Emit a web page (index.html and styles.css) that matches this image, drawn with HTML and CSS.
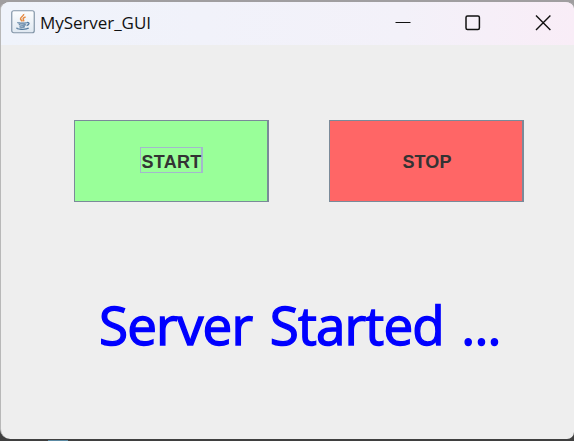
FILE: index.html
```
<!DOCTYPE html>
<html lang="en">
<head>
<meta charset="utf-8">
<title>MyServer_GUI</title>
<link rel="stylesheet" href="styles.css">
</head>
<body>
<div class="window">
  <header class="titlebar">
    <svg class="app-icon" viewBox="0 0 24 24" width="24" height="24" fill="none">
      <defs><linearGradient id="tile" x1="0" y1="0" x2="0" y2="1"><stop offset="0" stop-color="#fdfeff"/><stop offset="1" stop-color="#dfe8f1"/></linearGradient></defs>
      <rect x=".75" y=".75" width="22.5" height="22" rx="2" fill="url(#tile)" stroke="#8295a7" stroke-width="1.2"/>
      <path d="M12.700 4c.5 2-3.500 3-3.200 5 .1 1 1.500 1.500 1.900 2.400M14.600 7c-1.400.4-2.800 1.300-2.400 2.300.3.8 1 .9.200 2.100" stroke="#e58a42" stroke-width="1.500"/>
      <path d="M6.800 12.300c-.8 1 8.700.9 9 .1M7.800 14.500c1.500.9 5.500.8 7 .1M8.500 16.600c1.500.7 4 .6 5.300.1M16 12.600c3-.7 2.500 2.400-.4 2.900M6.400 17.800c-3 1.500 8.800 2.300 11.300.3" stroke="#557b9e" stroke-width="1.300"/>
    </svg>
    <span class="title">MyServer_GUI</span>
    <div class="controls">
      <svg viewBox="0 0 16 16"><path d="M.5 7.500h15"/></svg>
      <svg viewBox="0 0 16 16"><rect x="1" y="1" width="13.400" height="13.400" rx="1.500" stroke-width="1.500"/></svg>
      <svg viewBox="0 0 16 16"><path d="M1 .500l14.400 14.400M15.400.500L1 14.900" stroke-width="1.400"/></svg>
    </div>
  </header>
  <main class="content">
    <div class="buttons">
      <button class="btn start"><span class="focus">START</span></button>
      <button class="btn stop"><span>STOP</span></button>
    </div>
    <p class="status">Server Started ...</p>
  </main>
</div>
</body>
</html>
```
FILE: styles.css
```
* { box-sizing: border-box; }
body {
  margin: 0;
  width: 574px;
  height: 441px;
  overflow: hidden;
  background:
    linear-gradient(#5c8ba4, #5c8ba4) 48px 440px / 20px 1px no-repeat,
    linear-gradient(#77964f, #77964f) 14px 0 / 9px 1px no-repeat,
    linear-gradient(#a09ea0 0 50%, #3f3f3f 50%);
}
.window {
  height: 439px;
  border-top: 2px solid #a09ea0;
  border-left: 1px solid #b8b8b8;
  border-radius: 10px 9px 7px 10px;
  overflow: hidden;
  background: #eee;
}
.titlebar {
  display: flex;
  align-items: center;
  height: 43px;
  padding: 0 23px 2px 10px;
  background: linear-gradient(90deg, #eff3fb, #f3f1f9 70%, #f9edf7);
}
.app-icon { margin-top: -1px; }
.title {
  margin-left: 5px;
  font: 17px/24px "Open Sans", sans-serif;
  letter-spacing: -0.05px;
  color: #111;
}
.controls { display: flex; gap: 54px; margin-left: auto; }
.controls svg {
  display: block;
  width: 16px;
  height: 16px;
  fill: none;
  stroke: #111;
  stroke-width: 1;
}
.content { padding: 75px 50px 0 73px; }
.buttons { display: flex; justify-content: space-between; }
.btn {
  display: flex;
  align-items: center;
  justify-content: center;
  width: 195px;
  height: 82px;
  padding: 0 0 0 2px;
  border: 1px solid #7a8a99;
  border-right-width: 2px;
  font: bold 18px/25px "Liberation Sans", Arial, sans-serif;
  color: #333;
}
.start { background: #9f9; padding: 0 0 2px; }
.stop { background: #f66; letter-spacing: 0.1px; padding-top: 2px; }
.focus {
  width: 63px;
  height: 26px;
  padding-left: 1px;
  border: 1px solid #a3b8cc;
  border-right-width: 2px;
  line-height: 28px;
  letter-spacing: 0.3px;
  text-align: left;
}
.status {
  margin: 87px 0 0 25px;
  font: 500 53px/72px "Open Sans", sans-serif;
  letter-spacing: -0.85px;
  word-spacing: 4.5px;
  -webkit-text-stroke: 1.4px #00f;
  color: #00f;
  white-space: nowrap;
}
```
